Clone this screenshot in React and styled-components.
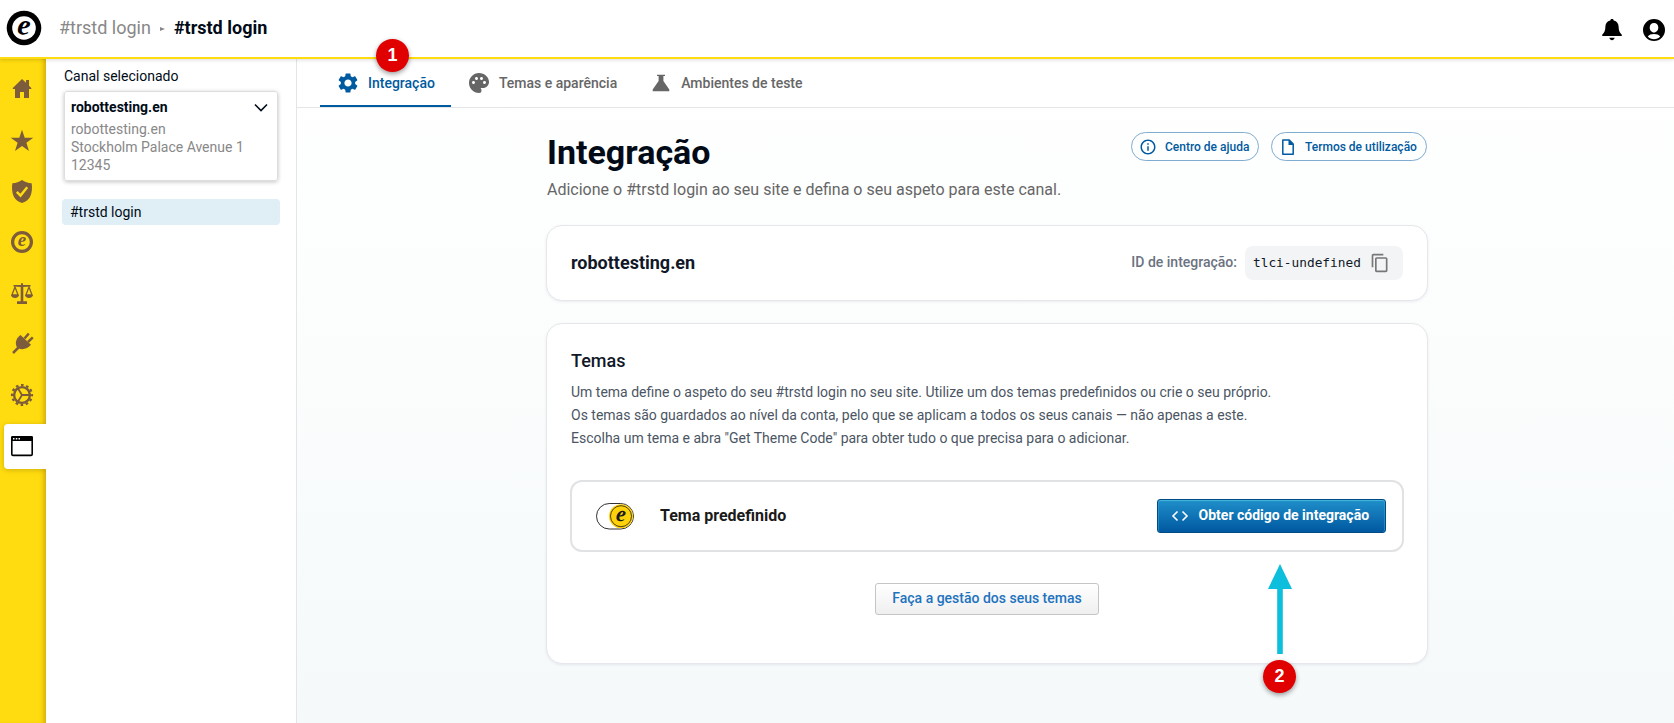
import React from 'react';
import styled, { createGlobalStyle } from 'styled-components';
import { MdSettings, MdPalette, MdInfoOutline, MdContentCopy } from 'react-icons/md';

const Global = createGlobalStyle`
  * { box-sizing: border-box; }
  body {
    margin: 0;
    background: #fff;
    color: #000b17;
    font-family: Roboto, "Liberation Sans", sans-serif;
    font-size: 14px;
  }
  svg { display: block; flex: none; overflow: visible; }
  h1, h2, p { margin: 0; }
  button { font-family: inherit; cursor: pointer; }
`;

const Page = styled.div`
  position: relative;
  width: 1674px;
  height: 723px;
  overflow: hidden;
  display: flex;
  flex-direction: column;
`;

const Header = styled.header`
  position: relative;
  z-index: 2;
  height: 59px;
  flex: none;
  display: flex;
  align-items: center;
  padding: 0 8px 2px 6px;
  background: #fff;
  border-bottom: 2px solid #ffdc0f;
  box-shadow: 0 1px 4px rgba(0, 0, 0, 0.14);
`;

const Crumbs = styled.nav`
  display: flex;
  align-items: center;
  margin-left: 17px;
  font-size: 18px;
  line-height: 24px;
`;

const Crumb = styled.span`
  color: ${(p) => (p.$current ? '#000b17' : '#888')};
  font-weight: ${(p) => (p.$current ? 700 : 400)};
`;

const CrumbArrow = styled.i`
  width: 0;
  height: 0;
  margin: 2px 9px 0 9px;
  border: 2.5px solid transparent;
  border-left: 5px solid #888;
  border-right: 0;
`;

const HeaderActions = styled.div`
  display: flex;
  gap: 18px;
  margin: 4px 0 0 auto;
  color: #000;
`;

const Body = styled.div`
  flex: 1;
  min-height: 0;
  display: flex;
`;

const Rail = styled.nav`
  width: 46px;
  flex: none;
  padding: 8px 0 0 4px;
  display: flex;
  flex-direction: column;
  gap: 6px;
  background: #ffdc0f;
  box-shadow: inset -5px 0 5px -3px rgba(120, 90, 0, 0.38);
`;

const RailItem = styled.a`
  height: 45px;
  flex: none;
  padding: 10px 6px;
  border-radius: 4px 0 0 4px;
  color: ${(p) => (p.$active ? '#000' : '#7d5c3c')};
  background: ${(p) => (p.$active ? '#fff' : 'transparent')};
  box-shadow: ${(p) => (p.$active ? '0 1px 5px rgba(120, 90, 0, 0.35)' : 'none')};
`;

const ChannelPanel = styled.aside`
  width: 251px;
  flex: none;
  position: relative;
  padding: 8px 16px 0;
  background: #fff;
  border-right: 1px solid #e3e5e7;
`;

const PanelLabel = styled.div`
  padding-left: 2px;
  line-height: 18px;
`;

const ChannelSelect = styled.div`
  height: 90px;
  margin: 6px 2px 0;
  padding: 6px 7px 0 6px;
  border: 1px solid #dedede;
  border-radius: 3px;
  box-shadow: 0 1px 4px rgba(0, 0, 0, 0.24);
  line-height: 18px;
  color: #888;
`;

const ChannelName = styled.div`
  display: flex;
  align-items: center;
  justify-content: space-between;
  margin-bottom: 4px;
  color: #000b17;
  font-weight: 700;
`;

const ChannelItem = styled.a`
  display: block;
  height: 26px;
  margin: 18px 0 0;
  padding-left: 8px;
  border-radius: 4px;
  background: #e0eff6;
  line-height: 26px;
`;

const Main = styled.main`
  flex: 1;
  min-width: 0;
  background: linear-gradient(180deg, #ffffff 0%, #fbfdfd 45%, #f5f9fa 100%);
`;

const Tabs = styled.div`
  height: 49px;
  display: flex;
  padding-left: 23px;
  background: #fff;
  border-bottom: 1px solid #e3e5e7;
`;

const Tab = styled.a`
  height: 48px;
  display: flex;
  align-items: center;
  gap: 8px;
  padding: 2px 16px 0;
  font-weight: 500;
  color: ${(p) => (p.$active ? '#005aa0' : '#666')};
  border-bottom: 2px solid ${(p) => (p.$active ? '#005aa0' : 'transparent')};
`;

const Content = styled.div`
  width: 882px;
  margin: 24px 0 0 249px;
`;

const Intro = styled.div`
  display: flex;
  align-items: flex-start;
  justify-content: space-between;
  height: 93px;
  padding: 0 1px;
`;

const Title = styled.h1`
  font-size: 34px;
  line-height: 40px;
  font-weight: 700;
`;

const Subtitle = styled.p`
  margin-top: 6px;
  font-size: 16px;
  line-height: 24px;
  color: #666;
`;

const Pills = styled.div`
  display: flex;
  gap: 12px;
`;

const Pill = styled.a`
  width: ${(p) => p.$width}px;
  height: 29px;
  display: flex;
  align-items: center;
  gap: 8px;
  padding-left: 7px;
  border: 1px solid #80acd0;
  border-radius: 15px;
  color: #005aa0;
  font-size: 12px;
  font-weight: 500;
`;

const Card = styled.section`
  height: ${(p) => p.$height}px;
  padding: 0 24px;
  background: #fff;
  border: 1px solid #e5e7eb;
  border-radius: 16px;
  box-shadow: 0 1px 3px rgba(0, 20, 60, 0.07);
  & + & { margin-top: 22px; }
`;

const ChannelRow = styled.div`
  height: 100%;
  display: flex;
  align-items: center;
`;

const ChannelTitle = styled.h2`
  margin-top: -2px;
  font-size: 18px;
  font-weight: 700;
  color: #111827;
`;

const IdLabel = styled.span`
  margin: -2px 8px 0 auto;
  font-weight: 500;
  color: #6b7280;
`;

const IdBox = styled.div`
  width: 158px;
  height: 34px;
  display: flex;
  align-items: center;
  justify-content: space-between;
  padding: 0 13px 0 8px;
  border-radius: 8px;
  background: #f3f4f6;
  font: 12.8px/16px "DejaVu Sans Mono", monospace;
  color: #111827;
`;

const IdValue = styled.code`
  font: inherit;
`;

const ThemesTitle = styled.h2`
  padding-top: 23px;
  font-size: 18px;
  line-height: 27px;
  font-weight: 500;
  color: #111827;
`;

const ThemesText = styled.p`
  margin-top: 7px;
  line-height: 23px;
  color: #4b5563;
`;

const ThemeRow = styled.div`
  height: 72px;
  margin: 30px -1px 0 -1px;
  display: flex;
  align-items: center;
  padding: 0 16px 0 24px;
  border: 2px solid #e1e2e3;
  border-radius: 12px;
`;

const ThemeName = styled.span`
  margin: -2px 0 0 25px;
  font-size: 16px;
  font-weight: 700;
  color: #1a1a1a;
`;

const PrimaryButton = styled.button`
  width: 229px;
  height: 34px;
  margin-left: auto;
  display: flex;
  align-items: center;
  gap: 9.6px;
  padding: 0 0 2px 13px;
  border: 1px solid #004b85;
  border-radius: 3px;
  background: linear-gradient(180deg, #208fca 0%, #0058a0 100%);
  box-shadow: inset 0 1px 1px #45b8dc, inset 1px 0 0 rgba(50, 160, 210, 0.5), inset -1px 0 0 rgba(50, 160, 210, 0.5);
  color: #fff;
  font-size: 14px;
  font-weight: 700;
  svg { position: relative; top: 1px; }
`;

const SecondaryButton = styled.button`
  display: block;
  width: 224px;
  height: 32px;
  margin: 31px auto 0;
  padding: 0 0 2px;
  border: 1px solid #c5c5c5;
  border-radius: 3px;
  background: linear-gradient(180deg, #fff 0%, #efefef 100%);
  color: #1e73be;
  font-size: 14px;
  font-weight: 500;
`;

const Marker = styled.div`
  position: absolute;
  z-index: 3;
  left: ${(p) => p.$x}px;
  top: ${(p) => p.$y}px;
  width: 33px;
  height: 33px;
  border-radius: 50%;
  background: #e10000;
  box-shadow: 0 2px 5px rgba(0, 0, 0, 0.4);
  color: #fff;
  font: 700 18px/32px "Liberation Sans", sans-serif;
  text-align: center;
`;

const Arrow = styled.svg`
  position: absolute;
  z-index: 3;
  left: 1268px;
  top: 564px;
`;

const LetterE = ({ x, y, size, fill = 'currentColor' }) => (
  <text x={x} y={y} fontSize={size} fill={fill} textAnchor="middle"
    fontFamily='"Liberation Serif", serif' fontStyle="italic" fontWeight="700">e</text>
);

const Logo = () => (
  <svg width="36" height="36" viewBox="0 0 36 36">
    <circle cx="18" cy="18" r="17.3" fill="#000" />
    <circle cx="18" cy="18" r="11.8" fill="#fff" />
    <g transform="rotate(6 18 18)"><LetterE x="17.8" y="24.500" size="29" fill="#000" /></g>
  </svg>
);

const Icon = ({ children, size = 24 }) => (
  <svg width={size} height={size} viewBox="0 0 24 24" fill="currentColor">{children}</svg>
);

const railIcons = [
  ['home', <path d="M12 2 16 5.8V3h3v5.700l2.300 2.300v1H19v9h-5v-6h-4v6H5v-9H2.800v-1z" />],
  ['star', <path d="m12 1.800 2.700 7.900h8.600l-6.900 5 2.600 8.200-7-5-7 5 2.600-8.200-6.900-5h8.600z" />],
  ['shield', (
    <>
      <path d="M12 1C9.300 3 6 4 2.400 4.200 1.600 8 1.900 14 4 18c1.700 3 4.500 5 8 6 3.500-1 6.300-3 8-6 2.100-4 2.400-10 1.600-13.800C18 4 14.700 3 12 1z" />
      <path d="m6.800 12.800 3.700 3.800 6.700-8.400" fill="none" stroke="#ffdc0f" strokeWidth="2.400" />
    </>
  )],
  ['brand', (
    <>
      <circle cx="12" cy="12" r="9.400" fill="none" stroke="currentColor" strokeWidth="3.200" />
      <LetterE x="11.900" y="16.400" size="19" />
    </>
  )],
  ['scales', (
    <>
      <path d="M11 2.300h2v1.600h7.500v1.600L13.300 6v14.300H17V23H7v-2.700h3.700V6l-7.200-.5V3.900H11z" />
      <path d="M5 6 1.900 14h6.200zM19 6l-3.100 8h6.200z" fill="none" stroke="currentColor" strokeWidth="1.300" />
      <path d="M1 14h8c-.5 4-7.500 4-8 0zM15 14h8c-.5 4-7.500 4-8 0z" />
    </>
  )],
  ['plug', (
    <g stroke="currentColor" strokeWidth="2.500" fill="none">
      <path d="m3 21 5.500-5.500M14.500 6.500l4.300-5M18 10l4.800-4.600" />
      <path d="M10.500 3 21 12.800c-3 3.700-8.500 5.500-12.500 3.500l-2-2C4.600 10 7 5.500 10.500 3z" fill="currentColor" stroke="none" />
    </g>
  )],
  ['settings', (
    <g stroke="currentColor" fill="none">
      <circle cx="12" cy="12" r="7.900" strokeWidth="2.400" />
      <circle cx="12" cy="12" r="9.900" strokeWidth="2.400" strokeDasharray="2.600 2.583" strokeDashoffset="1.300" />
      <path d="M12 12h7M12 12 8 5.500M12 12l-4 6.500" strokeWidth="1.800" />
    </g>
  )],
  ['window', (
    <>
      <rect x="1.800" y="2.800" width="20.400" height="18.600" rx="1.200" fill="none" stroke="currentColor" strokeWidth="1.600" />
      <path d="M1 7V3.500Q1 2 2.500 2h19Q23 2 23 3.500V7z" />
      <path d="M3 4.100h1.500v1.300H3zM5.800 4.100h1.500v1.300H5.800zM8.500 4.100H10v1.300H8.500z" fill="#fff" />
    </>
  )],
];

export default function App() {
  return (
    <Page>
      <Global />
      <Header>
        <Logo />
        <Crumbs>
          <Crumb>#trstd login</Crumb>
          <CrumbArrow />
          <Crumb $current>#trstd login</Crumb>
        </Crumbs>
        <HeaderActions>
          <Icon>
            <path d="M12 1c-1.200 0-1.600.6-1.700 1.400C7 3 5.500 5.500 5.400 8.500c-.1 4-.8 6-3.200 8.300v1.100h19.600v-1.100c-2.400-2.300-3.100-4.300-3.200-8.300C18.500 5.500 17 3 13.700 2.400 13.600 1.600 13.200 1 12 1zM9.300 19.800h5.400c-.4 1.600-1.500 2.400-2.700 2.400s-2.300-.8-2.700-2.400z" />
          </Icon>
          <Icon>
            <path fillRule="evenodd" d="M12 1a11 11 0 1 0 0 22 11 11 0 0 0 0-22zm0 4c2.700 0 4.300 1.900 4.300 4.500S14.500 14.500 12 14.500 7.700 12.100 7.700 9.500 9.300 5 12 5zM5.800 18.600c1-2 3.500-2.700 6.200-2.700s5.200.7 6.200 2.700c-1.600 1.700-3.800 2.700-6.200 2.700s-4.600-1-6.200-2.700z" />
          </Icon>
        </HeaderActions>
      </Header>

      <Body>
        <Rail>
          {railIcons.map(([name, drawing]) => (
            <RailItem key={name} $active={name === 'window'}><Icon>{drawing}</Icon></RailItem>
          ))}
        </Rail>

        <ChannelPanel>
          <PanelLabel>Canal selecionado</PanelLabel>
          <ChannelSelect>
            <ChannelName>
              robottesting.en
              <svg width="18" height="18" viewBox="0 0 18 18">
                <path d="m3 6.500 6 6 6-6" fill="none" stroke="#000b17" strokeWidth="1.600" />
              </svg>
            </ChannelName>
            <div>robottesting.en</div>
            <div>Stockholm Palace Avenue 1</div>
            <div>12345</div>
          </ChannelSelect>
          <ChannelItem>#trstd login</ChannelItem>
        </ChannelPanel>

        <Main>
          <Tabs>
            <Tab $active><MdSettings size={24} />Integração</Tab>
            <Tab><MdPalette size={24} />Temas e aparência</Tab>
            <Tab>
              <Icon><path d="M8 3.700h8V5h-1.600v4.900L20.300 18.500V20.300H3.700v-1.800L9.600 9.900V5H8z" /></Icon>
              Ambientes de teste
            </Tab>
          </Tabs>

          <Content>
            <Intro>
              <div>
                <Title>Integração</Title>
                <Subtitle>Adicione o #trstd login ao seu site e defina o seu aspeto para este canal.</Subtitle>
              </div>
              <Pills>
                <Pill $width={128}><MdInfoOutline size={18} />Centro de ajuda</Pill>
                <Pill $width={156}>
                  <svg width="18" height="18" viewBox="0 0 18 18">
                    <path d="M3.800 2h6.500L14.200 6v10.200H3.800z" fill="none" stroke="currentColor" strokeWidth="1.500" strokeLinejoin="round" />
                    <path d="M9.500 1.500 14.800 7H9.500z" fill="currentColor" />
                  </svg>
                  Termos de utilização
                </Pill>
              </Pills>
            </Intro>

            <Card $height={76}>
              <ChannelRow>
                <ChannelTitle>robottesting.en</ChannelTitle>
                <IdLabel>ID de integração:</IdLabel>
                <IdBox><IdValue>tlci-undefined</IdValue><MdContentCopy size={20} color="#777" /></IdBox>
              </ChannelRow>
            </Card>

            <Card $height={341}>
              <ThemesTitle>Temas</ThemesTitle>
              <ThemesText>
                Um tema define o aspeto do seu #trstd login no seu site. Utilize um dos temas predefinidos ou crie o seu próprio.<br />
                Os temas são guardados ao nível da conta, pelo que se aplicam a todos os seus canais — não apenas a este.<br />
                Escolha um tema e abra "Get Theme Code" para obter tudo o que precisa para o adicionar.
              </ThemesText>
              <ThemeRow>
                <svg width="39" height="27" viewBox="0 0 39 27">
                  <rect x="0.500" y="0.500" width="37" height="25.500" rx="12.750" fill="#fff" stroke="#1a1a1a" strokeWidth="0.900" />
                  <circle cx="25" cy="13.200" r="12" fill="#ffd20a" />
                  <circle cx="25" cy="13.200" r="10.500" fill="none" stroke="#3a3212" strokeWidth="0.900" />
                  <g transform="rotate(6 25 13)"><LetterE x="25" y="18.100" size="22" fill="#1a1a1a" /></g>
                </svg>
                <ThemeName>Tema predefinido</ThemeName>
                <PrimaryButton>
                  <svg width="18" height="18" viewBox="0 0 18 18">
                    <path d="M6.500 4.500 2 9l4.500 4.500M11.500 4.500 16 9l-4.500 4.500" fill="none" stroke="currentColor" strokeWidth="1.600" />
                  </svg>
                  Obter código de integração
                </PrimaryButton>
              </ThemeRow>
              <SecondaryButton>Faça a gestão dos seus temas</SecondaryButton>
            </Card>
          </Content>
        </Main>
      </Body>

      <Marker $x={376} $y={39}>1</Marker>
      <Arrow width="24" height="90" viewBox="0 0 24 90">
        <path d="M12 0 24 25H14.800V90H9.200V25H0z" fill="#0dbedd" />
      </Arrow>
      <Marker $x={1263} $y={660}>2</Marker>
    </Page>
  );
}
